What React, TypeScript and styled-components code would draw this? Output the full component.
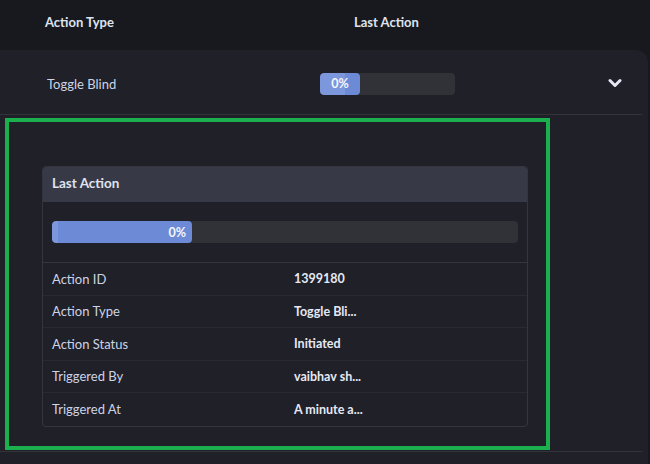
import React from "react";
import styled, { createGlobalStyle } from "styled-components";

const Global = createGlobalStyle`
  html, body { margin: 0; padding: 0; background: #18191e; }
  body { font-family: Lato, "Noto Sans", sans-serif; color: #dfe3ef; }
  * { box-sizing: border-box; }
`;

const Page = styled.div`
  width: 650px;
  height: 464px;
  background: #18191e;
  overflow: hidden;
`;

const HeaderRow = styled.div`
  height: 50px;
  display: grid;
  grid-template-columns: 309px 1fr;
  align-items: center;
  padding-left: 45px;
  padding-bottom: 6px;
`;

const HeaderCell = styled.div`
  font-size: 13px;
  font-weight: 700;
  color: #dfe3ef;
`;

const Panel = styled.div`
  width: 648px;
  height: 414px;
  background: #1f2028;
  border-top-right-radius: 12px;
`;

const MainRow = styled.div`
  width: 642px;
  height: 65px;
  display: grid;
  grid-template-columns: 273px 1fr 46px;
  align-items: center;
  border-bottom: 1px solid #33343a;
  padding-left: 47px;
  padding-top: 3px;
`;

const RowText = styled.div`
  font-size: 13px;
  color: #cdd3e6;
`;

const Track = styled.div<{ $w: number; $h: number }>`
  position: relative;
  width: ${(p) => p.$w}px;
  height: ${(p) => p.$h}px;
  background: #313238;
  border-radius: 4px;
  overflow: hidden;
`;

const Fill = styled.div<{ $align: string }>`
  height: 100%;
  background: #6d8ad6;
  border-radius: 4px;
  display: flex;
  align-items: center;
  justify-content: ${(p) => p.$align};
  padding-right: 6px;
  font-size: 12.5px;
  font-weight: 700;
  color: #f4f6fc;
  position: relative;
`;

const Shine = styled.span`
  position: absolute;
  left: 0;
  top: 0;
  bottom: 0;
  background: #8aa3e3;
  opacity: 0.55;
  border-radius: 4px 0 0 4px;
`;

const FillLabel = styled.span`
  position: relative;
`;

const Chevron = styled.div`
  display: flex;
  justify-content: center;
  padding-right: 8px;
  padding-bottom: 2px;
  color: #e4e6f2;
`;

const Expanded = styled.div`
  padding-top: 3px;
  width: 642px;
  border-bottom: 1px solid #33343a;
  padding-bottom: 1px;
`;

const Highlight = styled.div`
  margin-left: 5px;
  width: 545px;
  height: 332px;
  border: 4px solid #1bb04d;
  padding: 44px 0 0 33px;
`;

const Card = styled.div`
  width: 486px;
  border: 1px solid #35363d;
  border-radius: 4px;
  overflow: hidden;
`;

const CardHeader = styled.div`
  height: 35px;
  background: #383946;
  display: flex;
  align-items: center;
  padding-left: 9px;
  padding-bottom: 3px;
  font-size: 13.5px;
  font-weight: 700;
  color: #dfe3ef;
`;

const CardBody = styled.div`
  padding: 19px 9px 19px 9px;
  border-bottom: 1px solid #35363d;
`;

const InfoRow = styled.div<{ $last?: boolean }>`
  height: 32.5px;
  display: grid;
  grid-template-columns: 242px 1fr;
  align-items: center;
  padding-left: 9px;
  border-bottom: ${(p) => (p.$last ? "none" : "1px solid #292a31")};
`;

const Label = styled.div`
  font-size: 13px;
  color: #cdd3e6;
`;

const Value = styled.div`
  font-size: 12.5px;
  font-weight: 700;
  color: #e6e9f4;
`;

const rows: [string, string][] = [
  ["Action ID", "1399180"],
  ["Action Type", "Toggle Bli..."],
  ["Action Status", "Initiated"],
  ["Triggered By", "vaibhav sh..."],
  ["Triggered At", "A minute a..."],
];

export default function App() {
  return (
    <Page>
      <Global />
      <HeaderRow>
        <HeaderCell>Action Type</HeaderCell>
        <HeaderCell>Last Action</HeaderCell>
      </HeaderRow>
      <Panel>
        <MainRow>
          <RowText>Toggle Blind</RowText>
          <Track $w={135} $h={22}>
            <Fill $align="center" style={{ width: 40, paddingRight: 0 }}>
              <Shine style={{ width: 25 }} />
              <FillLabel>0%</FillLabel>
            </Fill>
          </Track>
          <Chevron>
            <svg width="14" height="10" viewBox="0 0 14 10">
              <polyline
                points="2,2.5 7,7.5 12,2.5"
                fill="none"
                stroke="currentColor"
                strokeWidth="3"
                strokeLinecap="round"
                strokeLinejoin="round"
              />
            </svg>
          </Chevron>
        </MainRow>
        <Expanded>
          <Highlight>
            <Card>
              <CardHeader>Last Action</CardHeader>
              <CardBody>
                <Track $w={466} $h={22}>
                  <Fill $align="flex-end" style={{ width: 140 }}>
                    <Shine style={{ width: 6 }} />
                    <FillLabel>0%</FillLabel>
                  </Fill>
                </Track>
              </CardBody>
              {rows.map(([k, v], i) => (
                <InfoRow key={k} $last={i === rows.length - 1}>
                  <Label>{k}</Label>
                  <Value>{v}</Value>
                </InfoRow>
              ))}
            </Card>
          </Highlight>
        </Expanded>
      </Panel>
    </Page>
  );
}
